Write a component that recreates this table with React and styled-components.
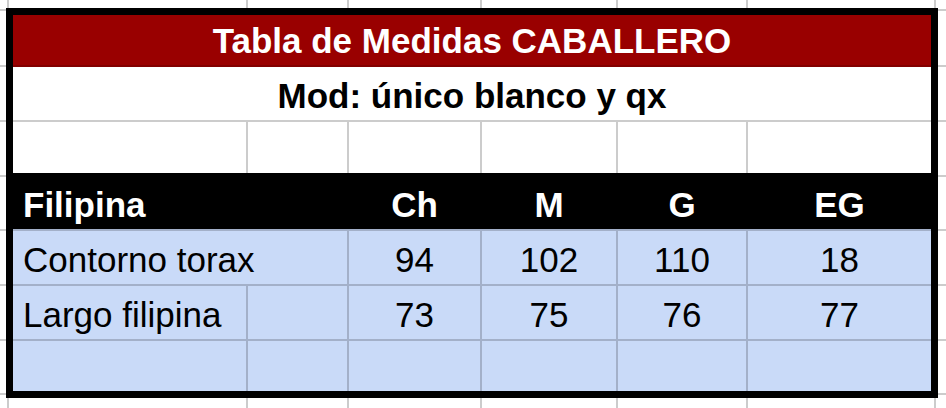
import React from "react";
import styled, { createGlobalStyle } from "styled-components";

const GlobalStyle = createGlobalStyle`
  html, body {
    margin: 0;
    padding: 0;
    background: #fff;
  }
  body {
    font-family: "Liberation Sans", Arial, sans-serif;
  }
`;

const GRID = "#cccccc";
const BLUE_GRID = "#a3b0c9";
const colLines = [7, 246, 347, 480, 616, 746, 934];
const rowLines = [9, 65, 120, 175, 229, 284, 339, 393];

const gridBg = [
  ...colLines.map(
    (x) => `linear-gradient(${GRID}, ${GRID}) ${x}px 0 / 2px 100% no-repeat`
  ),
  ...rowLines.map(
    (y) => `linear-gradient(${GRID}, ${GRID}) 0 ${y}px / 100% 2px no-repeat`
  ),
].join(", ");

const sizes = ["Ch", "M", "G", "EG"];

const rows = [
  { label: "Contorno torax", values: ["94", "102", "110", "18"], h: 55, span: 2 },
  { label: "Largo filipina", values: ["73", "75", "76", "77"], h: 55, span: 1 },
  { label: "", values: ["", "", "", ""], h: 52, span: 1 },
];

function App() {
  return (
    <>
      <GlobalStyle />
      <Sheet>
        <Table>
          <Banner $h={52} $bg="#990000" $fg="#fff" $line="#820000">
            Tabla de Medidas CABALLERO
          </Banner>
          <Banner $h={55} $bg="#fff" $fg="#000" $line={GRID}>
            Mod: único blanco y qx
          </Banner>

          {[0, 1, 2, 3, 4, 5].map((i) => (
            <Cell key={"e" + i} $h={51} $bg="#fff" $line={i < 5 ? GRID : null} />
          ))}

          <Cell $h={56} $bg="#000" $line="#000" $span={2} $left $bold $fg="#fff">
            Filipina
          </Cell>
          {sizes.map((s, i) => (
            <Cell
              key={s}
              $h={56}
              $bg="#000"
              $line={i < 3 ? "#000" : null}
              $bold
              $fg="#fff"
            >
              {s}
            </Cell>
          ))}

          {rows.map((r, ri) => (
            <React.Fragment key={ri}>
              <Cell $h={r.h} $bg="#c9daf8" $top $line={BLUE_GRID} $span={r.span} $left>
                {r.label}
              </Cell>
              {r.span === 1 && <Cell $h={r.h} $bg="#c9daf8" $top $line={BLUE_GRID} />}
              {r.values.map((v, i) => (
                <Cell
                  key={i}
                  $h={r.h}
                  $bg="#c9daf8"
                  $top
                  $line={i < 3 ? BLUE_GRID : null}
                >
                  {v}
                </Cell>
              ))}
            </React.Fragment>
          ))}
        </Table>
      </Sheet>
    </>
  );
}

export default App;

const Sheet = styled.div`
  width: 946px;
  height: 408px;
  box-sizing: border-box;
  padding: 8px 0 0 6px;
  background: ${gridBg};
  overflow: hidden;
`;

const Table = styled.div`
  width: 932px;
  box-sizing: border-box;
  border: 7px solid #000;
  display: grid;
  grid-template-columns: 235px 101px 133px 136px 130px 183px;
  background: #fff;
`;

const Banner = styled.div`
  grid-column: 1 / -1;
  height: ${(p) => p.$h}px;
  box-sizing: border-box;
  display: flex;
  align-items: flex-end;
  justify-content: center;
  padding-bottom: 4px;
  background: ${(p) => p.$bg};
  color: ${(p) => p.$fg};
  border-bottom: 2px solid ${(p) => p.$line};
  font-size: 35px;
  font-weight: 700;
  white-space: nowrap;
`;

const Cell = styled.div`
  grid-column: span ${(p) => p.$span || 1};
  height: ${(p) => p.$h}px;
  box-sizing: border-box;
  display: flex;
  align-items: flex-end;
  justify-content: ${(p) => (p.$left ? "flex-start" : "center")};
  padding: 0 0 4px ${(p) => (p.$left ? 10 : 0)}px;
  background: ${(p) => p.$bg};
  color: ${(p) => p.$fg || "#000"};
  border-right: ${(p) => (p.$line ? `2px solid ${p.$line}` : "none")};
  border-top: ${(p) => (p.$top ? `2px solid ${BLUE_GRID}` : "none")};
  font-size: 35px;
  font-weight: ${(p) => (p.$bold ? 700 : 400)};
  white-space: nowrap;
`;
